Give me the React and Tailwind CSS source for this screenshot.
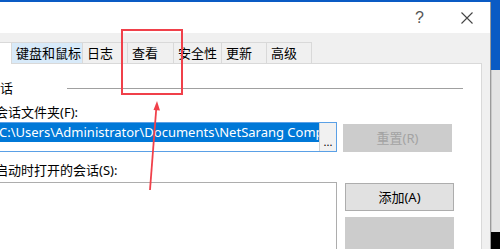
export default function App() {
  const font = { fontFamily: '"Noto Sans", "Noto Sans CJK SC", sans-serif' };
  const tabs = [
    { t: "键盘和鼠标", w: "w-[71px]", bg: "bg-[#d8eaf9]" },
    { t: "日志", w: "w-[45px]", bg: "bg-[#f0f0f0]" },
    { t: "查看", w: "w-[46px]", bg: "bg-[#f0f0f0]" },
    { t: "安全性", w: "w-[48px]", bg: "bg-[#f0f0f0]" },
    { t: "更新", w: "w-[45px]", bg: "bg-[#f0f0f0]" },
    { t: "高级", w: "w-[45px]", bg: "bg-[#f0f0f0]" },
  ];
  return (
    <div
      className="relative w-[500px] h-[249px] overflow-hidden bg-[#0a5bc4] pt-[2px] text-[13px] text-black"
      style={font}
    >
      <div className="flex h-[247px]">
        {/* dialog */}
        <div className="w-[491px] flex flex-col border-r border-[#9a9a9a] bg-[#f0f0f0]">
          {/* title bar */}
          <div className="h-[31px] bg-white flex items-center justify-end pr-[17px] shrink-0">
            <span className="text-[16px] leading-none text-[#555] mr-[37px]" style={{ fontFamily: '"Liberation Sans", sans-serif' }}>?</span>
            <svg width="12" height="12" viewBox="0 0 12 12">
              <path d="M0.5 0.5 L11.5 11.5 M11.5 0.5 L0.5 11.5" stroke="#444" strokeWidth="1.1" />
            </svg>
          </div>
          {/* tabs */}
          <div className="pt-[9px] flex flex-col flex-1 min-h-0">
            <div className="flex h-[21px] shrink-0">
              <div className="w-[12px] h-[22px] bg-white border-t border-r border-[#d9d9d9] relative z-10" />
              {tabs.map((tb) => (
                <div
                  key={tb.t}
                  className={`${tb.w} ${tb.bg} h-[21px] border-t border-r border-[#d9d9d9] flex items-center pl-[4px] leading-none whitespace-nowrap`}
                >
                  {tb.t}
                </div>
              ))}
            </div>
            {/* panel */}
            <div className="w-[482px] flex-1 bg-white border-t border-r border-[#d9d9d9] flex flex-col">
              {/* group header */}
              <div className="mt-[14px] h-[20px] flex items-center">
                <span className="-ml-[13px] leading-none">会话</span>
                <div className="ml-[54px] w-[396px] h-px bg-[#a0a0a0]" />
              </div>
              <div className="mt-[4px] h-[20px] flex items-center -ml-[5px] leading-none">会话文件夹(F):</div>
              {/* input row */}
              <div className="h-[30px] flex items-end">
                <div className="-ml-[6px] w-[343px] h-[30px] border border-[#5aa0e6] flex">
                  <div className="flex-1 overflow-hidden">
                    <div className="h-[19px] bg-[#0078d7] text-white flex items-center pl-[4px] whitespace-nowrap leading-none">
                      C:\Users\Administrator\Documents\NetSarang Computer\7\Xshell\Sessions
                    </div>
                  </div>
                  <div className="w-[17px] bg-[#f1f1f1] border-l border-[#d0d0d0] flex items-end justify-center pb-[4px] text-[11px] leading-none">
                    ...
                  </div>
                </div>
                <div className="ml-[6px] w-[109px] h-[28px] bg-[#cccccc] text-[#a3a3a3] flex items-center justify-center leading-none">
                  重置(R)
                </div>
              </div>
              <div className="mt-[8px] h-[20px] flex items-center -ml-[5px] leading-none">启动时打开的会话(S):</div>
              {/* list row */}
              <div className="mt-[2px] flex flex-1">
                <div className="-ml-[6px] w-[343px] border-t border-r border-[#adadad]" />
                <div className="ml-[8px] flex flex-col pt-[1px]">
                  <div className="w-[109px] h-[28px] bg-[#e1e1e1] border border-[#adadad] flex items-center justify-center leading-none">
                    添加(A)
                  </div>
                  <div className="mt-[6px] w-[109px] h-[40px] bg-[#cccccc]" />
                </div>
              </div>
            </div>
          </div>
        </div>
        {/* desktop strip */}
        <div className="w-[9px] flex flex-col">
          <div className="h-[68px]" />
          <div className="flex-1 bg-[#e3e3e3] border-l border-[#c8c8c8]" />
          <div className="h-[17px] bg-black" />
        </div>
      </div>

      {/* red annotation */}
      <div className="absolute left-[121px] top-[29px] w-[62px] h-[66px] border-2 border-[#f0404a]" />
      <svg className="absolute left-0 top-0" width="500" height="249" viewBox="0 0 500 249">
        <line x1="150" y1="190" x2="156.3" y2="108" stroke="#f0404a" strokeWidth="1.8" />
        <polygon points="157,101 153.5,110 160,110.5" fill="#f0404a" />
      </svg>
    </div>
  );
}
